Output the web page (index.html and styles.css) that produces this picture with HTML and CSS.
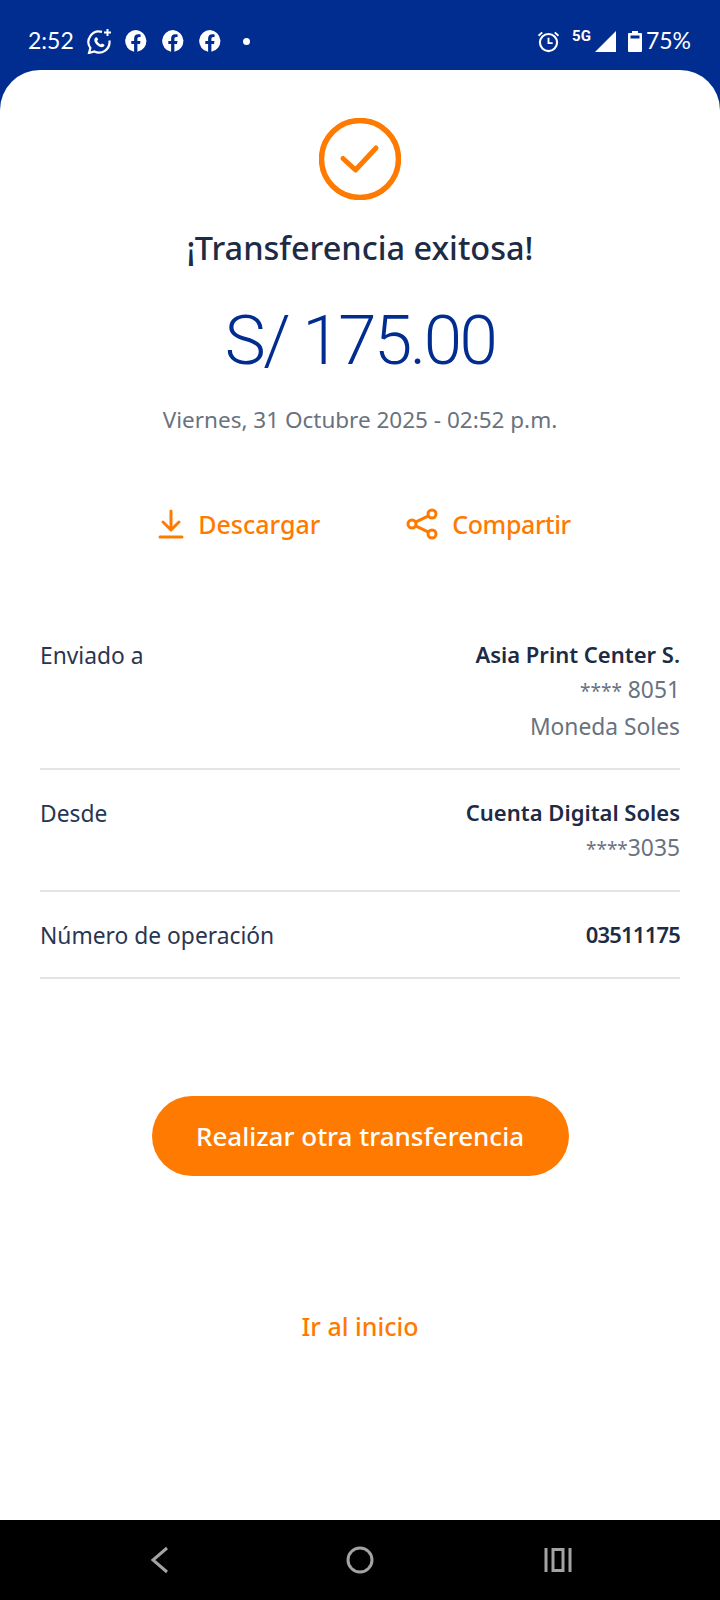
FILE: index.html
```html
<!DOCTYPE html>
<html lang="es">
<head>
  <meta charset="UTF-8" />
  <title>Transferencia exitosa</title>
  <link rel="stylesheet" href="styles.css">
</head>
<body>
  <div class="status-bar">
    <span class="time">2:52</span>
    <svg class="st-wa" width="26" height="26" viewBox="0 0 26 26">
      <path d="M15 3.900A10.500 10.500 0 0 0 3.400 20L2 25l5.300-1.600A10.500 10.500 0 0 0 22.400 12.500" fill="none" stroke="#fff" stroke-width="2.200"/>
      <path d="M8 10c1-1.200 2-1 2.400 0l.7 1.600-1 1.400c.7 1.500 2 2.700 3.500 3.400l1.400-1 1.700.8c1 .5 1 1.500 0 2.400-1.500 1.300-4 .7-6.300-1.300-2.500-2.300-4-5-2.400-7.300z" fill="#fff"/>
      <path d="M20.500 1v7M17 4.500h7" stroke="#fff" stroke-width="2" fill="none"/>
    </svg>
    <svg class="st-fb" width="22" height="22" viewBox="0 0 22 22"><use href="#fb"/></svg>
    <svg class="st-fb" width="22" height="22" viewBox="0 0 22 22"><use href="#fb"/></svg>
    <svg class="st-fb" width="22" height="22" viewBox="0 0 22 22"><use href="#fb"/></svg>
    <span class="st-dot"></span>
    <span class="st-spacer"></span>
    <svg class="st-alarm" width="23" height="23" viewBox="0 0 22 22" fill="none" stroke="#fff">
      <circle cx="11" cy="12" r="8.200" stroke-width="2"/>
      <path d="M11 7.500V12.500H15" stroke-width="1.800"/>
      <path d="M1.500 5.500 5 2.300M20.500 5.500 17 2.300" stroke-width="1.800"/>
    </svg>
    <span class="st-5g">5G</span>
    <svg class="st-signal" width="21" height="21" viewBox="0 0 21 21"><path d="M0 21 21 0V21z" fill="#fff"/></svg>
    <svg class="st-batt" width="14" height="21" viewBox="0 0 14 21">
      <path d="M4 0h6v2h3a1 1 0 0 1 1 1v17a1 1 0 0 1-1 1H1a1 1 0 0 1-1-1V3a1 1 0 0 1 1-1h3z" fill="#fff"/>
      <rect x="2.500" y="4.500" width="9" height="3" fill="#002d8f"/>
    </svg>
    <span class="pct">75%</span>
  </div>

  <svg class="defs" width="0" height="0">
    <symbol id="fb" viewBox="0 0 22 22">
      <path d="M11 0a11 11 0 0 0-1.900 21.800V14H6.300v-3.100h2.800V8.500c0-2.800 1.600-4.300 4.100-4.300 1.200 0 2.400.2 2.400.2v2.700h-1.400c-1.300 0-1.800.9-1.800 1.800v2h3.100l-.5 3.100h-2.600v7.800A11 11 0 0 0 11 0z" fill="#fff"/>
    </symbol>
  </svg>

  <main class="sheet">
    <svg class="ok-icon" width="82" height="82" viewBox="0 0 82 82" fill="none" stroke="#ff7a00">
      <circle cx="41" cy="41" r="38.500" stroke-width="5.500"/>
      <path d="M24 40.500 36.500 52 57 30" stroke-width="5" stroke-linecap="round" stroke-linejoin="round"/>
    </svg>
    <h1 class="title">¡Transferencia exitosa!</h1>
    <div class="amount">S/ 175.00</div>
    <div class="date">Viernes, 31 Octubre 2025 - 02:52 p.m.</div>

    <div class="actions">
      <a class="action">
        <svg width="26" height="30" viewBox="0 0 26 30" fill="none" stroke="#ff7a00" stroke-width="3" stroke-linecap="round" stroke-linejoin="round">
          <path d="M13 2V20M5 13l8 8 8-8"/>
          <path d="M2 28H24"/>
        </svg>
        Descargar
      </a>
      <a class="action action-share">
        <svg width="32" height="32" viewBox="0 0 32 32" fill="none" stroke="#ff7a00" stroke-width="3">
          <circle cx="26" cy="6" r="4"/>
          <circle cx="6" cy="16" r="4"/>
          <circle cx="26" cy="26" r="4"/>
          <path d="M9.500 14.200 22.500 7.800M9.500 17.800 22.500 24.200"/>
        </svg>
        Compartir
      </a>
    </div>

    <div class="details">
      <div class="row row-sent">
        <span class="label">Enviado a</span>
        <div class="values">
          <div class="strong">Asia Print Center S.</div>
          <div class="muted"><span class="stars">****</span> 8051</div>
          <div class="muted">Moneda Soles</div>
        </div>
      </div>
      <div class="row row-from">
        <span class="label">Desde</span>
        <div class="values">
          <div class="strong">Cuenta Digital Soles</div>
          <div class="muted"><span class="stars">****</span>3035</div>
        </div>
      </div>
      <div class="row row-op">
        <span class="label">Número de operación</span>
        <div class="values">
          <div class="strong op-num">03511175</div>
        </div>
      </div>
    </div>

    <button class="btn-again">Realizar otra transferencia</button>
    <a class="go-home">Ir al inicio</a>
  </main>

  <nav class="nav-bar">
    <svg width="28" height="30" viewBox="0 0 28 30" fill="none" stroke="#a3a3a3" stroke-width="3"><path d="M19 3 5 15l14 12"/></svg>
    <svg width="30" height="30" viewBox="0 0 30 30" fill="none" stroke="#a3a3a3" stroke-width="3"><circle cx="15" cy="15" r="12"/></svg>
    <svg width="30" height="30" viewBox="0 0 30 30" fill="none" stroke="#a3a3a3" stroke-width="3"><path d="M3 3V27M27 3V27"/><rect x="10" y="4.500" width="10" height="21"/></svg>
  </nav>
</body>
</html>
```

FILE: styles.css
```css
html, body {
  margin: 0; padding: 0;
  height: 1600px;
  font-family: "Noto Sans", Roboto, sans-serif;
  overflow: hidden;
  background: #002d8f;
}
.defs { position: absolute; }
.status-bar {
  height: 70px;
  box-sizing: border-box;
  padding: 12px 29px 0 28px;
  display: flex;
  align-items: center;
  color: #fff;
}
.time { font-size: 23px; font-family: Lato, sans-serif; margin: -2px 13px 0 0; }
.st-wa { margin-right: 12px; }
.st-fb { margin-right: 15px; }
.st-dot { width: 7px; height: 7px; border-radius: 50%; background: #fff; margin-left: 7px; }
.st-spacer { flex: 1; }
.st-alarm { margin-right: 12px; }
.st-5g { font-size: 15px; font-weight: 700; margin: -10px 4px 0 0; font-family: Roboto, sans-serif; }
.st-signal { margin-right: 12px; }
.st-batt { margin-right: 4px; }
.pct { font-size: 23px; font-family: Lato, sans-serif; margin-top: -2px; }

.sheet {
  height: 1450px;
  box-sizing: border-box;
  background: #fff;
  border-radius: 40px 40px 0 0;
  padding-top: 48px;
  display: flex;
  flex-direction: column;
  align-items: center;
}
.title {
  margin: 27px 0 0;
  font-size: 32.500px;
  line-height: 42px;
  font-weight: 500;
  color: #1d2b45;
}
.amount {
  margin-top: 27px;
  font-family: Roboto, sans-serif;
  font-size: 69px;
  font-weight: 300;
  line-height: 90px;
  letter-spacing: -2.500px;
  color: #002d8f;
}
.date {
  margin-top: 18px;
  font-size: 22.500px;
  line-height: 32px;
  color: #69727f;
}
.actions {
  margin: 70px 0 0 9px;
  display: flex;
  gap: 86px;
}
.action {
  display: flex;
  align-items: center;
  gap: 14px;
  font-size: 25px;
  line-height: 36px;
  font-weight: 500;
  color: #ff7a00;
}
.action-share { letter-spacing: -0.400px; }
.details {
  margin-top: 94px;
  width: 640px;
}
.row {
  display: flex;
  justify-content: space-between;
  border-bottom: 2px solid #e2e4e7;
  box-sizing: border-box;
  font-size: 22px;
  line-height: 36px;
}
.row-sent { height: 134px; }
.row-from { height: 122px; padding-top: 24px; }
.row-op { height: 87px; padding-top: 24px; }
.label { color: #2a3650; font-size: 22.800px; padding-top: 2px; }
.values { text-align: right; }
.strong { font-weight: 600; color: #1d2b45; }
.muted { color: #69727f; font-size: 22.800px; }
.stars { font-size: 19px; }
.op-num { letter-spacing: -0.800px; }

.btn-again {
  margin-top: 117px;
  width: 417px;
  height: 80px;
  border: none;
  border-radius: 40px;
  background: #ff7a00;
  color: #fff;
  font-family: inherit;
  font-size: 26px;
  font-weight: 500;
}
.go-home {
  margin-top: 132px;
  font-size: 25px;
  line-height: 36px;
  font-weight: 500;
  color: #ff7a00;
}
.nav-bar {
  height: 80px;
  background: #000;
  display: flex;
  align-items: center;
  justify-content: space-between;
  padding: 0 147px 0 148px;
}
```
